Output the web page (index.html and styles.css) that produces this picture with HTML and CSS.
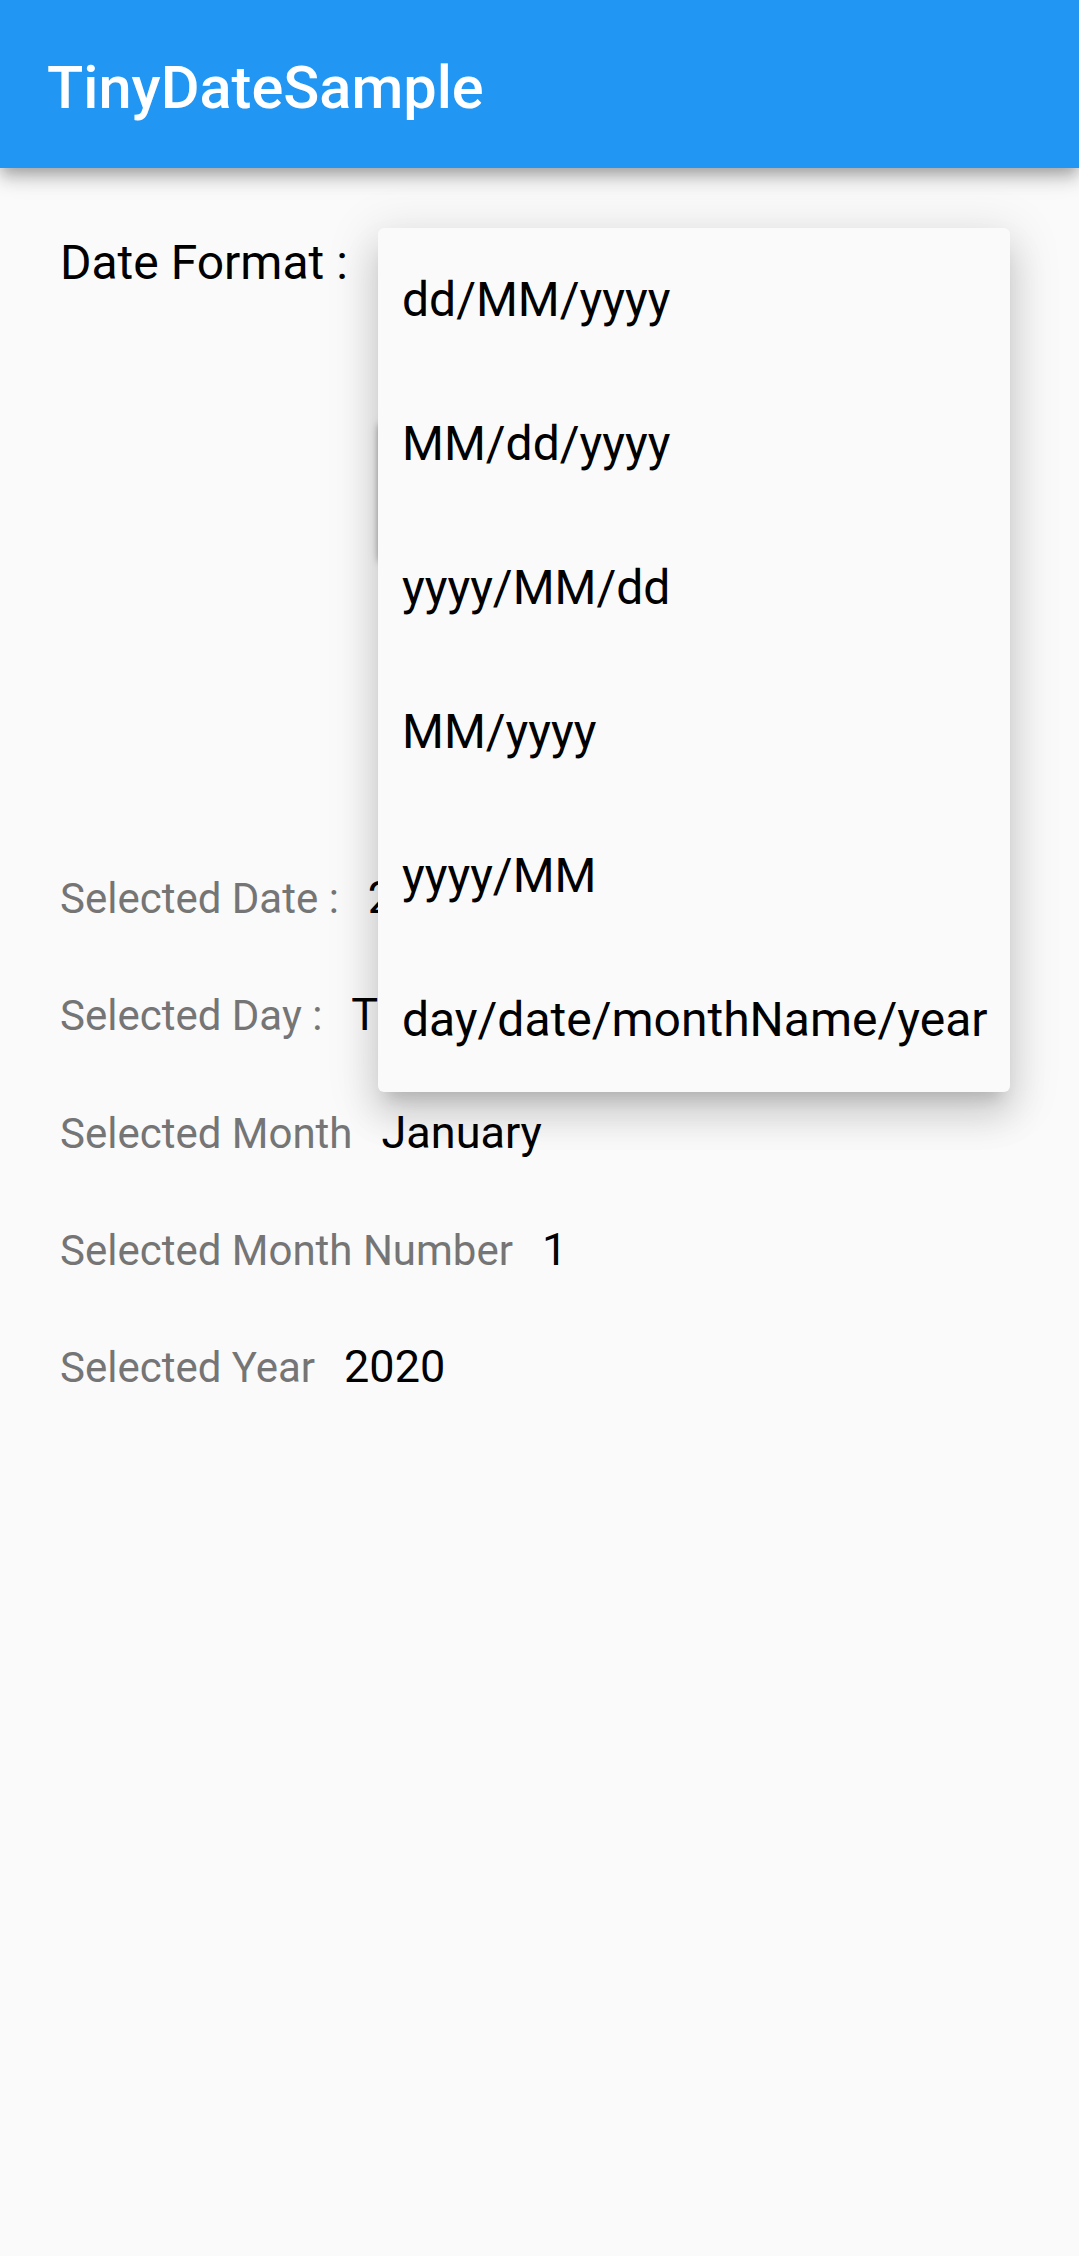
FILE: index.html
```html
<!DOCTYPE html>
<html lang="en">
<head>
<meta charset="utf-8">
<title>TinyDateSample</title>
<link rel="stylesheet" href="styles.css">
</head>
<body>
<header class="appbar">
  <h1 class="title">TinyDateSample</h1>
</header>
<main class="content">
  <div class="format-row">
    <span class="format-label">Date Format :</span>
    <div class="format-field">dd/MM/yyyy</div>
  </div>
  <div class="picker-area">
    <div class="select-button">SELECT DATE</div>
  </div>
  <div class="info-list">
    <div class="info-row"><span class="info-label">Selected Date :</span><span class="info-value">2/1/2020</span></div>
    <div class="info-row"><span class="info-label">Selected Day :</span><span class="info-value">Thursday</span></div>
    <div class="info-row"><span class="info-label">Selected Month</span><span class="info-value">January</span></div>
    <div class="info-row"><span class="info-label">Selected Month Number</span><span class="info-value">1</span></div>
    <div class="info-row"><span class="info-label">Selected Year</span><span class="info-value">2020</span></div>
  </div>
</main>
<div class="menu">
  <div class="menu-item">dd/MM/yyyy</div>
  <div class="menu-item">MM/dd/yyyy</div>
  <div class="menu-item">yyyy/MM/dd</div>
  <div class="menu-item">MM/yyyy</div>
  <div class="menu-item">yyyy/MM</div>
  <div class="menu-item">day/date/monthName/year</div>
</div>
</body>
</html>
```
FILE: styles.css
```css
html, body {
  margin: 0;
  padding: 0;
}
body {
  background: #fafafa;
  font-family: Roboto, "Liberation Sans", sans-serif;
  width: 1079px;
  height: 2256px;
  overflow: hidden;
  position: relative;
}
.appbar {
  box-sizing: border-box;
  height: 168px;
  padding: 57.5px 47px 0;
  background: #2196f3;
  box-shadow: 0 6px 12px -3px rgba(0,0,0,0.2), 0 12px 15px 0 rgba(0,0,0,0.14), 0 3px 30px 0 rgba(0,0,0,0.12);
  position: relative;
  z-index: 2;
}
.title {
  margin: 0;
  font-size: 59.5px;
  line-height: 60px;
  font-weight: 500;
  color: #ffffff;
}
.content {
  padding: 60px 0 0 60px;
}
.format-row {
  display: flex;
  align-items: flex-start;
  height: 144px;
}
.format-label {
  font-size: 48px;
  line-height: 69px;
  color: #000;
  width: 318px;
}
.format-field {
  font-size: 48px;
  line-height: 144px;
  padding-left: 24px;
  color: #000;
}
.picker-area {
  margin-top: 50px;
  padding-left: 320px;
  height: 136px;
}
.select-button {
  width: 320px;
  height: 136px;
  background: #e0e0e0;
  box-shadow: -2px 3px 6px rgba(0,0,0,0.28), 0 2px 14px rgba(0,0,0,0.12);
  font-size: 42px;
  line-height: 136px;
  text-align: center;
  color: #111;
}
.info-list {
  margin-top: 281px;
}
.info-row {
  display: flex;
  align-items: baseline;
  height: 117.25px;
}
.info-label {
  font-size: 42px;
  line-height: 117.25px;
  color: #757575;
}
.info-value {
  font-size: 45px;
  line-height: 117.25px;
  color: #000;
  margin-left: 29px;
}
.menu {
  position: absolute;
  left: 378px;
  top: 228px;
  width: 632px;
  height: 864px;
  background: #fafafa;
  border-radius: 6px;
  box-shadow: 0 15px 15px -9px rgba(0,0,0,0.14), 0 24px 36px 3px rgba(0,0,0,0.11), 0 9px 48px 8px rgba(0,0,0,0.1);
  z-index: 3;
}
.menu-item {
  height: 144px;
  line-height: 144px;
  padding-left: 24px;
  font-size: 48px;
  color: #000;
  white-space: nowrap;
}
```
